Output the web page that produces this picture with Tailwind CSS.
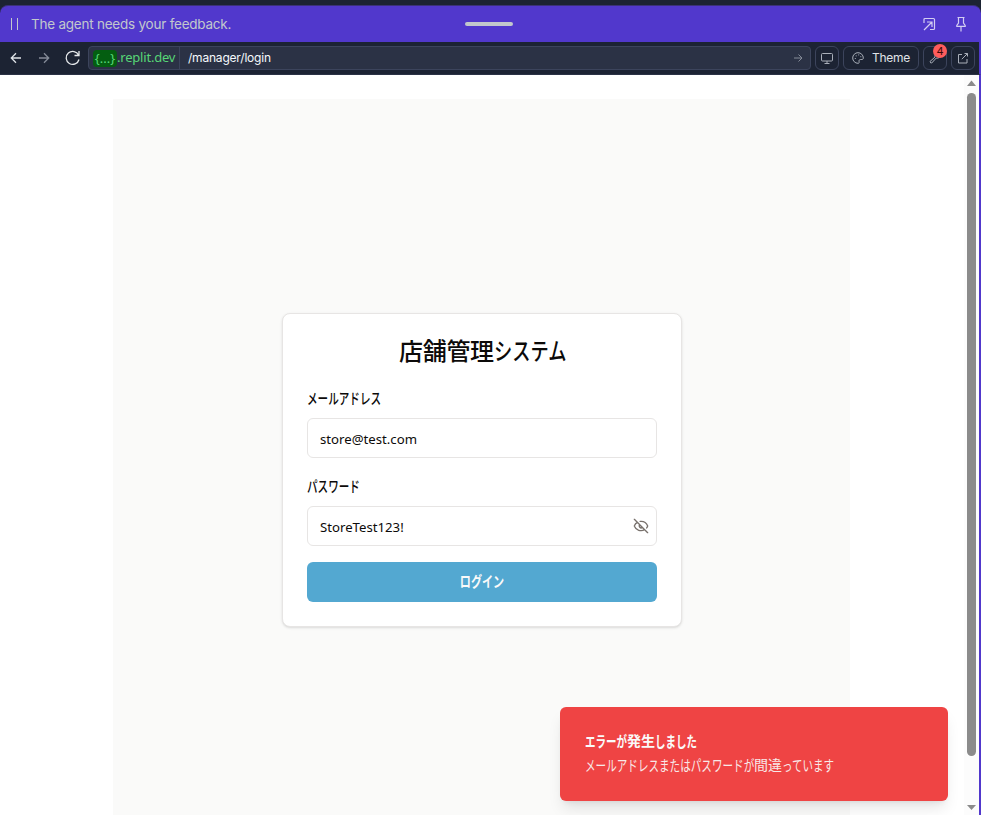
<!DOCTYPE html>
<html lang="ja">
<head>
<meta charset="utf-8">
<title>店舗管理システム</title>
<script src="https://cdn.jsdelivr.net/npm/@tailwindcss/browser@4"></script>
</head>
<body class="w-[981px] h-[815px] overflow-hidden bg-[#1c2333] flex flex-col font-['Noto_Sans','Noto_Sans_CJK_JP',sans-serif]">
  <div class="h-[5px] shrink-0"></div>
  <header class="h-[37px] shrink-0 bg-[#5138cc] border-t border-[#3b3278] rounded-t-lg flex items-center pl-[11px] pr-[12px] relative font-['Inter',sans-serif]">
    <div class="flex gap-[5px] w-[20px]"><i class="w-px h-3 bg-[#c2c8cc]"></i><i class="w-px h-3 bg-[#c2c8cc]"></i></div>
    <span class="text-[13.5px] leading-5 text-[#c2c8cc] whitespace-nowrap tracking-[-0.230px]">The agent needs your feedback.</span>
    <div class="absolute left-[465px] top-4 w-12 h-1 rounded-full bg-[#c2c8cc]"></div>
    <div class="ml-auto flex items-center gap-4 text-[#d3cdf2]">
      <svg class="size-4" viewBox="0 0 16 16" fill="none" stroke="currentColor" stroke-width="1.2"><path d="M3 7V3.500Q3 2.500 4 2.500H12.500Q13.500 2.500 13.500 3.500V12.500Q13.500 13.500 12.500 13.500H9M6 6h5v5M11 6L3 14"/></svg>
      <svg class="size-4" viewBox="0 0 16 16" fill="none" stroke="currentColor" stroke-width="1.2"><path d="M4.500 1.500h7M5.500 1.500V7L3.800 9.500v.8h8.400v-.8L10.500 7V1.500M8 10.500V15.500"/></svg>
    </div>
  </header>
  <nav class="h-[33px] shrink-0 bg-[#1c2333] border-b border-[#2b3245] border-r-2 border-r-[#5138cc] flex items-center pl-2 pr-1 font-['Inter',sans-serif] text-[#c2c8cc]">
    <svg class="size-4 mr-3" viewBox="0 0 16 16" fill="none" stroke="#dfe3e8" stroke-width="1.300"><path d="M13 8H3.300M8 3.300L3.300 8L8 12.700"/></svg>
    <svg class="size-4 mr-3" viewBox="0 0 16 16" fill="none" stroke="#858b98" stroke-width="1.300"><path d="M3 8h9.700M8 3.300L12.700 8L8 12.700"/></svg>
    <svg class="size-[17px] mr-[7px] mb-px" viewBox="0 0 17 17" fill="none" stroke="#e5e8eb" stroke-width="1.300"><path d="M15 2v4.500h-4.500M14.600 6.200A6.500 6.500 0 1 0 15 10.500"/></svg>
    <div class="w-[723px] h-6 shrink-0 rounded-[4px] border border-[#3c445c] bg-[#2b3245] flex items-center text-[12px]">
      <div class="w-[91px] h-full border-r border-[#3c445c] pl-1 flex items-center text-[#57d676] text-[13px] whitespace-nowrap font-['Noto_Sans',sans-serif]"><span class="bg-[#045e11] rounded-[4px] h-[17px] w-6 flex items-center justify-center leading-none">{...}</span><span class="tracking-[-0.200px]">.replit.dev</span></div>
      <span class="pl-2 text-[#f5f9fc] text-[12px] tracking-[-0.200px]">/manager/login</span>
      <svg class="ml-auto mr-[6px] size-3" viewBox="0 0 12 12" fill="none" stroke="#858b98"><path d="M2 6h8M6.500 2.500L10 6L6.500 9.500"/></svg>
    </div>
    <div class="ml-1 size-6 rounded-md border border-[#3c445c] grid place-items-center"><svg class="size-[14px]" viewBox="0 0 14 14" fill="none" stroke="#a9afb9"><rect x="1.500" y="2.500" width="11" height="7.500" rx="1"/><path d="M7 10v2M4.500 12.500h5"/></svg></div>
    <div class="ml-1 w-[76px] h-6 rounded-md border border-[#3c445c] flex items-center pl-2">
      <svg class="size-3" viewBox="0 0 12 12" fill="none" stroke="#a9afb9"><path d="M6 .7a5.300 5.300 0 1 0 0 10.600c1 0 1.400-.7 1.100-1.500-.5-1.500.3-2.300 1.600-2.300h1.200c.8 0 1.400-.5 1.400-1.500A5.300 5.300 0 0 0 6 .7Z"/><path d="M2.800 6.500h1M3.700 3.900h1M6.200 2.900h1M8.300 4.700h1"/></svg>
      <span class="ml-[8px] text-[12px] tracking-[-0.250px] text-[#e0e3e8]">Theme</span>
    </div>
    <div class="ml-1 size-6 rounded-md border border-[#3c445c] grid place-items-center relative">
      <svg class="size-3" viewBox="0 0 12 12" fill="none" stroke="#a9afb9"><path d="M1 9.500L6 5C5.500 2.500 7 1 9 1L8 3.500 9.500 4 11 3C11 5.500 9.500 6.500 7.200 6.100L2.700 11Q1.500 11.500 1 9.500Z"/></svg>
      <span class="absolute left-[9px] -top-[3px] size-[14px] rounded-full bg-[#ff5c5c] text-[#3b0808] text-[11px] leading-[14px] text-center">4</span>
    </div>
    <div class="ml-1 size-6 rounded-md border border-[#3c445c] grid place-items-center"><svg class="size-3" viewBox="0 0 12 12" fill="none" stroke="#a9afb9"><path d="M5 2.500H1.500v8.500H10V7M7.500 1.500H10.500v3M10.500 1.500L4.800 7.200"/></svg></div>
  </nav>
  <main class="flex-1 flex min-h-0 bg-white border-r-2 border-[#5138cc] relative">
    <div class="flex-1 pl-[113px] pt-6">
      <section class="w-[736.500px] h-full bg-[#fafaf9] pt-[214px]">
        <form class="ml-[169px] w-[400px] h-[314px] bg-white border border-[#e7e5e4] rounded-lg shadow-sm px-6 pt-[21px] text-[#0c0a09]">
          <h1 class="text-[24px] leading-8 font-medium flex pl-[92px] whitespace-nowrap"><span class="w-[95px] tracking-[-0.300px]">店舗管理</span><span class="w-[72px] origin-left scale-x-[.76]">システム</span></h1>
          <label class="mt-[21px] h-5 block text-[15px] leading-5 font-medium whitespace-nowrap origin-left scale-x-[.705]">メールアドレス</label>
          <div class="mt-[10px] h-10 rounded-md border border-[#e7e5e4] px-3 flex items-center text-[13.200px] pt-[3px]"><span>store@test.com</span></div>
          <label class="mt-[18px] h-5 block text-[15px] leading-5 font-medium whitespace-nowrap origin-left scale-x-[.705]">パスワード</label>
          <div class="mt-[10px] h-10 rounded-md border border-[#e7e5e4] pl-3 pr-[7px] flex items-center justify-between text-[13.200px]"><span class="pt-[3px]">StoreTest123!</span>
            <svg class="size-4" viewBox="0 0 24 24" fill="none" stroke="#78716c" stroke-width="2" stroke-linecap="round" stroke-linejoin="round"><path d="M10.700 5.100a10.700 10.700 0 0 1 11.200 6.600 1 1 0 0 1 0 .7 10.700 10.700 0 0 1-1.400 2.500M14.100 14.200a3 3 0 0 1-4.200-4.200M17.500 17.500a10.700 10.700 0 0 1-15.400-5.200 1 1 0 0 1 0-.7 10.700 10.700 0 0 1 4.400-5.100M2 2l20 20"/></svg>
          </div>
          <div class="mt-4 h-10 rounded-md bg-[#53a8d1] text-[#fafaf9] text-[15px] font-bold flex items-center justify-center pb-px"><span class="scale-x-[.74]">ログイン</span></div>
        </form>
      </section>
    </div>
    <div class="w-[15px] bg-[#fcfcfc] flex flex-col items-center">
      <svg class="mt-[5px] w-[9px] h-[6px] shrink-0" viewBox="0 0 9 6"><path d="M4.500 0.500L9 6H0Z" fill="#8b8b8b"/></svg>
      <div class="mt-[7px] w-[9px] h-[663px] shrink-0 rounded-full bg-[#8b8b8b]"></div>
      <svg class="mt-[49px] w-[9px] h-[5px] shrink-0" viewBox="0 0 9 5"><path d="M0 0H9L4.500 5Z" fill="#8b8b8b"/></svg>
    </div>
    <aside class="absolute left-[560px] top-[632px] w-[388px] h-[94px] rounded-md bg-[#ef4444] shadow-lg pl-[25px] pt-[24px] text-[15px] text-[#fafaf9] whitespace-nowrap">
      <div class="h-5 leading-5 font-bold flex"><span class="w-[42px] origin-left scale-x-[.7]">エラーが</span><span class="w-7 text-[14px]">発生</span><span class="w-11 origin-left scale-x-[.7]">しました</span></div>
      <div class="mt-1 h-5 leading-5 flex opacity-90"><span class="w-[169px] origin-left scale-x-[.705]">メールアドレスまたはパスワードが</span><span class="w-7 text-[14px]">間違</span><span class="origin-left scale-x-[.7]">っています</span></div>
    </aside>
  </main>
</body>
</html>
